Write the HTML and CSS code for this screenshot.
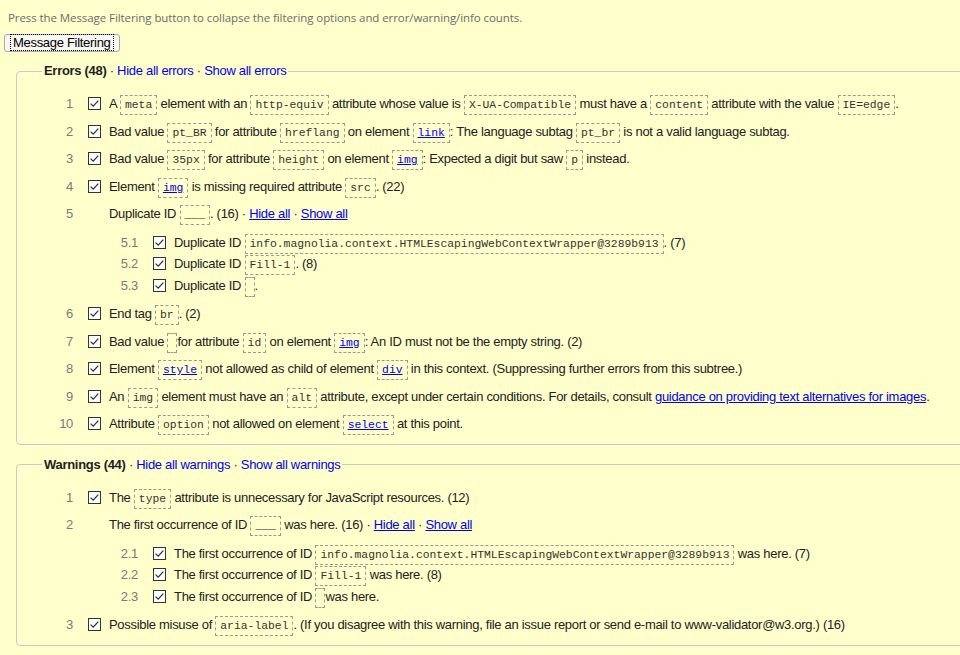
FILE: index.html
```html
<!DOCTYPE html>
<html lang="en">
<head>
<meta charset="utf-8">
<title>Message Filtering</title>
<link rel="stylesheet" href="styles.css">
</head>
<body>
<div class="page">
  <p class="note">Press the Message Filtering button to collapse the filtering options and error/warning/info counts.</p>
  <button class="filter-btn" type="button"><span class="focus">Message Filtering</span></button>

  <fieldset class="group">
    <legend class="legend"><strong>Errors (48)</strong> · <a class="lnk" href="#">Hide all errors</a> · <a class="lnk" href="#">Show all errors</a></legend>
    <ul class="list">
      <li class="row"><span class="num">1</span><svg class="cb" viewBox="0 0 13 13" width="13" height="13"><rect x="0.5" y="0.5" width="12" height="12" fill="#fff" stroke="#333"/><path d="M2.6 6.6 L5.2 9.1 L10.3 3.6" fill="none" stroke="#333" stroke-width="1.3"/></svg><span class="msg">A <code>meta</code> element with an <code>http-equiv</code> attribute whose value is <code>X-UA-Compatible</code> must have a <code>content</code> attribute with the value <code>IE=edge</code>.</span></li>
      <li class="row"><span class="num">2</span><svg class="cb" viewBox="0 0 13 13" width="13" height="13"><rect x="0.5" y="0.5" width="12" height="12" fill="#fff" stroke="#333"/><path d="M2.6 6.6 L5.2 9.1 L10.3 3.6" fill="none" stroke="#333" stroke-width="1.3"/></svg><span class="msg">Bad value <code>pt_BR</code> for attribute <code>hreflang</code> on element <code><a href="#">link</a></code>: The language subtag <code>pt_br</code> is not a valid language subtag.</span></li>
      <li class="row"><span class="num">3</span><svg class="cb" viewBox="0 0 13 13" width="13" height="13"><rect x="0.5" y="0.5" width="12" height="12" fill="#fff" stroke="#333"/><path d="M2.6 6.6 L5.2 9.1 L10.3 3.6" fill="none" stroke="#333" stroke-width="1.3"/></svg><span class="msg">Bad value <code>35px</code> for attribute <code>height</code> on element <code><a href="#">img</a></code>: Expected a digit but saw <code>p</code> instead.</span></li>
      <li class="row"><span class="num">4</span><svg class="cb" viewBox="0 0 13 13" width="13" height="13"><rect x="0.5" y="0.5" width="12" height="12" fill="#fff" stroke="#333"/><path d="M2.6 6.6 L5.2 9.1 L10.3 3.6" fill="none" stroke="#333" stroke-width="1.3"/></svg><span class="msg">Element <code><a href="#">img</a></code> is missing required attribute <code>src</code>. (22)</span></li>
      <li class="item">
        <div class="row"><span class="num">5</span><span class="cb-space"></span><span class="msg">Duplicate ID <code>___</code>. (16) · <a href="#">Hide all</a> · <a href="#">Show all</a></span></div>
        <ul class="sublist">
          <li class="row sub"><span class="num">5.1</span><svg class="cb" viewBox="0 0 13 13" width="13" height="13"><rect x="0.5" y="0.5" width="12" height="12" fill="#fff" stroke="#333"/><path d="M2.6 6.6 L5.2 9.1 L10.3 3.6" fill="none" stroke="#333" stroke-width="1.3"/></svg><span class="msg">Duplicate ID <code>info.magnolia.context.HTMLEscapingWebContextWrapper@3289b913</code>. (7)</span></li>
          <li class="row sub"><span class="num">5.2</span><svg class="cb" viewBox="0 0 13 13" width="13" height="13"><rect x="0.5" y="0.5" width="12" height="12" fill="#fff" stroke="#333"/><path d="M2.6 6.6 L5.2 9.1 L10.3 3.6" fill="none" stroke="#333" stroke-width="1.3"/></svg><span class="msg">Duplicate ID <code>Fill-1</code>. (8)</span></li>
          <li class="row sub"><span class="num">5.3</span><svg class="cb" viewBox="0 0 13 13" width="13" height="13"><rect x="0.5" y="0.5" width="12" height="12" fill="#fff" stroke="#333"/><path d="M2.6 6.6 L5.2 9.1 L10.3 3.6" fill="none" stroke="#333" stroke-width="1.3"/></svg><span class="msg">Duplicate ID <code></code>.</span></li>
        </ul>
      </li>
      <li class="row"><span class="num">6</span><svg class="cb" viewBox="0 0 13 13" width="13" height="13"><rect x="0.5" y="0.5" width="12" height="12" fill="#fff" stroke="#333"/><path d="M2.6 6.6 L5.2 9.1 L10.3 3.6" fill="none" stroke="#333" stroke-width="1.3"/></svg><span class="msg">End tag <code>br</code>. (2)</span></li>
      <li class="row"><span class="num">7</span><svg class="cb" viewBox="0 0 13 13" width="13" height="13"><rect x="0.5" y="0.5" width="12" height="12" fill="#fff" stroke="#333"/><path d="M2.6 6.6 L5.2 9.1 L10.3 3.6" fill="none" stroke="#333" stroke-width="1.3"/></svg><span class="msg">Bad value <code></code>for attribute <code>id</code> on element <code><a href="#">img</a></code>: An ID must not be the empty string. (2)</span></li>
      <li class="row"><span class="num">8</span><svg class="cb" viewBox="0 0 13 13" width="13" height="13"><rect x="0.5" y="0.5" width="12" height="12" fill="#fff" stroke="#333"/><path d="M2.6 6.6 L5.2 9.1 L10.3 3.6" fill="none" stroke="#333" stroke-width="1.3"/></svg><span class="msg">Element <code><a href="#">style</a></code> not allowed as child of element <code><a href="#">div</a></code> in this context. (Suppressing further errors from this subtree.)</span></li>
      <li class="row"><span class="num">9</span><svg class="cb" viewBox="0 0 13 13" width="13" height="13"><rect x="0.5" y="0.5" width="12" height="12" fill="#fff" stroke="#333"/><path d="M2.6 6.6 L5.2 9.1 L10.3 3.6" fill="none" stroke="#333" stroke-width="1.3"/></svg><span class="msg">An <code>img</code> element must have an <code>alt</code> attribute, except under certain conditions. For details, consult <a href="#">guidance on providing text alternatives for images</a>.</span></li>
      <li class="row"><span class="num">10</span><svg class="cb" viewBox="0 0 13 13" width="13" height="13"><rect x="0.5" y="0.5" width="12" height="12" fill="#fff" stroke="#333"/><path d="M2.6 6.6 L5.2 9.1 L10.3 3.6" fill="none" stroke="#333" stroke-width="1.3"/></svg><span class="msg">Attribute <code>option</code> not allowed on element <code><a href="#">select</a></code> at this point.</span></li>
    </ul>
  </fieldset>

  <fieldset class="group group-warn">
    <legend class="legend"><strong>Warnings (44)</strong> · <a class="lnk" href="#">Hide all warnings</a> · <a class="lnk" href="#">Show all warnings</a></legend>
    <ul class="list">
      <li class="row"><span class="num">1</span><svg class="cb" viewBox="0 0 13 13" width="13" height="13"><rect x="0.5" y="0.5" width="12" height="12" fill="#fff" stroke="#333"/><path d="M2.6 6.6 L5.2 9.1 L10.3 3.6" fill="none" stroke="#333" stroke-width="1.3"/></svg><span class="msg">The <code>type</code> attribute is unnecessary for JavaScript resources. (12)</span></li>
      <li class="item">
        <div class="row"><span class="num">2</span><span class="cb-space"></span><span class="msg">The first occurrence of ID <code>___</code> was here. (16) · <a href="#">Hide all</a> · <a href="#">Show all</a></span></div>
        <ul class="sublist">
          <li class="row sub"><span class="num">2.1</span><svg class="cb" viewBox="0 0 13 13" width="13" height="13"><rect x="0.5" y="0.5" width="12" height="12" fill="#fff" stroke="#333"/><path d="M2.6 6.6 L5.2 9.1 L10.3 3.6" fill="none" stroke="#333" stroke-width="1.3"/></svg><span class="msg">The first occurrence of ID <code>info.magnolia.context.HTMLEscapingWebContextWrapper@3289b913</code> was here. (7)</span></li>
          <li class="row sub"><span class="num">2.2</span><svg class="cb" viewBox="0 0 13 13" width="13" height="13"><rect x="0.5" y="0.5" width="12" height="12" fill="#fff" stroke="#333"/><path d="M2.6 6.6 L5.2 9.1 L10.3 3.6" fill="none" stroke="#333" stroke-width="1.3"/></svg><span class="msg">The first occurrence of ID <code>Fill-1</code> was here. (8)</span></li>
          <li class="row sub"><span class="num">2.3</span><svg class="cb" viewBox="0 0 13 13" width="13" height="13"><rect x="0.5" y="0.5" width="12" height="12" fill="#fff" stroke="#333"/><path d="M2.6 6.6 L5.2 9.1 L10.3 3.6" fill="none" stroke="#333" stroke-width="1.3"/></svg><span class="msg">The first occurrence of ID <code></code>was here.</span></li>
        </ul>
      </li>
      <li class="row"><span class="num">3</span><svg class="cb" viewBox="0 0 13 13" width="13" height="13"><rect x="0.5" y="0.5" width="12" height="12" fill="#fff" stroke="#333"/><path d="M2.6 6.6 L5.2 9.1 L10.3 3.6" fill="none" stroke="#333" stroke-width="1.3"/></svg><span class="msg">Possible misuse of <code>aria-label</code>. (If you disagree with this warning, file an issue report or send e-mail to www-validator@w3.org.) (16)</span></li>
    </ul>
  </fieldset>
</div>
</body>
</html>
```

FILE: styles.css
```css
html {
  overflow: hidden;
  background: #ffffcc;
}

body {
  margin: 0;
  background: #ffffcc;
  color: #222;
  font-family: "Liberation Sans", Arial, sans-serif;
  font-size: 13px;
  letter-spacing: -0.3px;
}

.page {
  padding: 10px 0 0 0;
}

.note {
  margin: 0 0 0 8px;
  font-family: "Open Sans", "Liberation Sans", sans-serif;
  font-size: 11.5px;
  line-height: 16px;
  letter-spacing: -0.08px;
  color: #6d6d6d;
}

.filter-btn {
  display: block;
  margin: 8px 0 0 4px;
  height: 18px;
  padding: 0 6px;
  border: 1px solid #a9a9a9;
  border-radius: 3px;
  background: #f7f7f2;
  color: #000;
  font-family: "Liberation Sans", Arial, sans-serif;
  font-size: 13px;
  letter-spacing: -0.3px;
  line-height: 16px;
}

.focus {
  display: inline-block;
  padding: 0 2px;
  outline: 1px dotted #000;
  line-height: 15px;
}

.group {
  margin: 11px -60px 0 16px;
  padding: 0;
  border: 1px solid #c9c9cc;
  border-radius: 4px;
  min-width: 0;
}

.group-warn {
  margin-top: 12px;
}

.legend {
  margin-left: 25px;
  padding: 0 2px;
  line-height: 16px;
  color: #222;
}

.legend strong {
  font-weight: bold;
}

a {
  color: #0000ee;
}

.lnk {
  text-decoration: none;
}

.list {
  list-style: none;
  margin: 0;
  padding: 11px 0 6px 0;
}

.sublist {
  list-style: none;
  margin: 0;
  padding: 4px 0 4px 65px;
}

.item {
  margin: 0;
}

.row {
  display: flex;
  align-items: center;
  white-space: nowrap;
  padding: 4px 0;
  line-height: 19.5px;
}

.row.sub {
  padding: 1px 0;
}

.num {
  flex: none;
  width: 56px;
  text-align: right;
  color: #7a7a7a;
}

.cb {
  flex: none;
  display: block;
  margin: 0 8px 0 15px;
}

.cb-space {
  flex: none;
  width: 13px;
  height: 13px;
  margin: 0 8px 0 15px;
}

.msg {
  display: block;
}

code {
  font-family: "Liberation Mono", "Courier New", monospace;
  font-size: 0.875em;
  line-height: 1;
  letter-spacing: 0;
  color: #333;
  border: 1px dashed #999;
  padding: 3px 4px;
}
```
